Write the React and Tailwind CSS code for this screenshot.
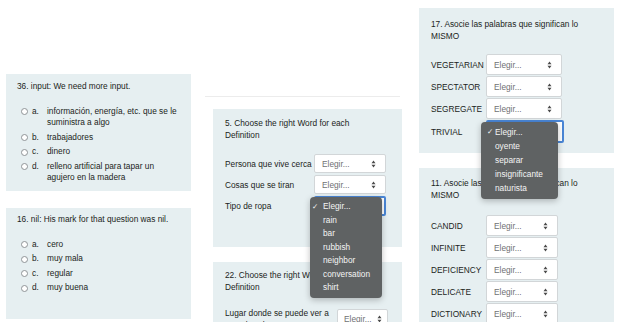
import React from "react";

const Arrows = () => (
  <svg width="5" height="8" viewBox="0 0 5 8" className="shrink-0">
    <path d="M2.5 0.6 L4.5 3.2 H0.5 Z M2.5 7.4 L0.5 4.8 H4.5 Z" fill="#4a4a4a" />
  </svg>
);

function Select({ cls = "", focused = false, children }) {
  return (
    <div
      className={`relative flex items-center justify-between bg-white rounded-[2px] pl-[7px] pr-[9px] text-[#6f7173] ${
        focused ? "border-2 border-[#4a86d6]" : "border border-[#d2d6d8]"
      } ${cls}`}
    >
      <span>Elegir...</span>
      <Arrows />
      {children}
    </div>
  );
}

function Menu({ items, cls, checkCls, textCls, itemCls }) {
  return (
    <div className={`absolute z-20 rounded-[4px] bg-[#5f6263] shadow-[0_2px_6px_rgba(0,0,0,0.25)] text-[#f4f4f4] ${cls}`}>
      {items.map((it, i) => (
        <div key={it} className={`relative whitespace-nowrap ${itemCls} ${textCls}`}>
          {i === 0 && (
            <span className={`absolute top-0 font-['DejaVu_Sans',sans-serif] text-[7.5px] ${checkCls}`}>✓</span>
          )}
          {it}
        </div>
      ))}
    </div>
  );
}

function Radio() {
  return <span className="mt-[2.5px] w-[7px] h-[7px] rounded-full border border-[#8f9497] bg-white shrink-0" />;
}

function Option({ letter, children }) {
  return (
    <div className="flex items-start">
      <Radio />
      <span className="ml-[4px] w-[15px] shrink-0">{letter}</span>
      <span className="whitespace-nowrap">{children}</span>
    </div>
  );
}

const card = "bg-[#e6eff1] shrink-0";

export default function App() {
  return (
    <div className="w-[622px] h-[328px] bg-white overflow-hidden flex text-[8.3px] leading-[11.5px] text-[#1b1e21] font-['Liberation_Sans',Arial,sans-serif]">
      {/* Column 1 */}
      <div className="ml-[6px] w-[185px] pt-[74px] flex flex-col gap-[17px] shrink-0">
        <div className={`${card} h-[117px] pt-[7px] pl-[11px]`}>
          <div>36. input: We need more input.</div>
          <div className="mt-[13px] pl-[4px] flex flex-col gap-[3px]">
            <Option letter="a.">
              información, energía, etc. que se le
              <br />
              suministra a algo
            </Option>
            <Option letter="b.">trabajadores</Option>
            <Option letter="c.">dinero</Option>
            <Option letter="d.">
              relleno artificial para tapar un
              <br />
              agujero en la madera
            </Option>
          </div>
        </div>
        <div className={`${card} h-[111px] pt-[6px] pl-[11px]`}>
          <div>16. nil: His mark for that question was nil.</div>
          <div className="mt-[13px] pl-[4px] flex flex-col gap-[3px]">
            <Option letter="a.">cero</Option>
            <Option letter="b.">muy mala</Option>
            <Option letter="c.">regular</Option>
            <Option letter="d.">muy buena</Option>
          </div>
        </div>
      </div>

      {/* Column 2 */}
      <div className="ml-[14px] w-[197px] h-[322px] overflow-hidden pt-[96px] shrink-0 flex flex-col">
        <div className="h-px w-[195px] bg-[#ececec] shrink-0" />
        <div className={`${card} ml-[8px] w-[189px] h-[138px] mt-[12px] pt-[8px] pl-[12px] leading-[12px]`}>
          <div>
            5. Choose the right Word for each
            <br />
            Definition
          </div>
          <div className="mt-[13px] grid grid-cols-[89px_72px] gap-y-[2px] items-center">
            <div className="whitespace-nowrap">Persona que vive cerca</div>
            <Select cls="h-[19px]" />
            <div>Cosas que se tiran</div>
            <Select cls="h-[19px]" />
            <div>Tipo de ropa</div>
            <Select cls="h-[20px]" focused>
              <Menu
                cls="left-[-6px] top-[-1px] w-[72px] pt-[3px] pb-[3.5px]"
                checkCls="left-[2px]"
                textCls="pl-[13px]"
                itemCls="leading-[13.5px]"
                items={["Elegir...", "rain", "bar", "rubbish", "neighbor", "conversation", "shirt"]}
              />
            </Select>
          </div>
        </div>
        <div className={`${card} ml-[8px] w-[189px] mt-[15px] h-[80px] pt-[7px] pl-[12px] leading-[12px]`}>
          <div>
            22. Choose the right Word for each
            <br />
            Definition
          </div>
          <div className="mt-[14px] grid grid-cols-[112px_51px] items-start">
            <div className="whitespace-nowrap">
              Lugar donde se puede ver a
              <br />
              una obra de teatro
            </div>
            <div className="mt-[2px] flex items-center justify-between h-[19px] bg-white border border-[#d2d6d8] rounded-[2px] pl-[6px] pr-[5px] text-[#6f7173]">
              <span>Elegir...</span>
              <Arrows />
            </div>
          </div>
        </div>
      </div>

      {/* Column 3 */}
      <div className="ml-[17px] w-[195px] h-[322px] overflow-hidden pt-[8px] shrink-0 flex flex-col">
        <div className={`${card} h-[145px] pt-[10px] pl-[12px] leading-[12px] relative z-10`}>
          <div>
            17. Asocie las palabras que significan lo
            <br />
            MISMO
          </div>
          <div className="mt-[12px] grid grid-cols-[55px_76px] gap-y-[1px] items-center">
            <div>VEGETARIAN</div>
            <Select cls="h-[21px]" />
            <div>SPECTATOR</div>
            <Select cls="h-[21px]" />
            <div>SEGREGATE</div>
            <Select cls="h-[21px]" />
            <div>TRIVIAL</div>
            <Select cls="h-[23px] w-[78px]" focused>
              <Menu
                cls="left-[-7px] top-[0px] w-[77px] pt-[3px] pb-[4px]"
                checkCls="left-[6px]"
                textCls="pl-[14px]"
                itemCls="leading-[14px]"
                items={["Elegir...", "oyente", "separar", "insignificante", "naturista"]}
              />
            </Select>
          </div>
        </div>
        <div className={`${card} mt-[15px] h-[170px] pt-[9px] pl-[12px] leading-[12px]`}>
          <div>
            11. Asocie las palabras que significan lo
            <br />
            MISMO
          </div>
          <div className="mt-[14px] grid grid-cols-[55px_72px] gap-y-[1px] items-center">
            <div>CANDID</div>
            <Select cls="h-[21px]" />
            <div>INFINITE</div>
            <Select cls="h-[21px]" />
            <div>DEFICIENCY</div>
            <Select cls="h-[21px]" />
            <div>DELICATE</div>
            <Select cls="h-[21px]" />
            <div>DICTIONARY</div>
            <Select cls="h-[21px]" />
          </div>
        </div>
      </div>
    </div>
  );
}
